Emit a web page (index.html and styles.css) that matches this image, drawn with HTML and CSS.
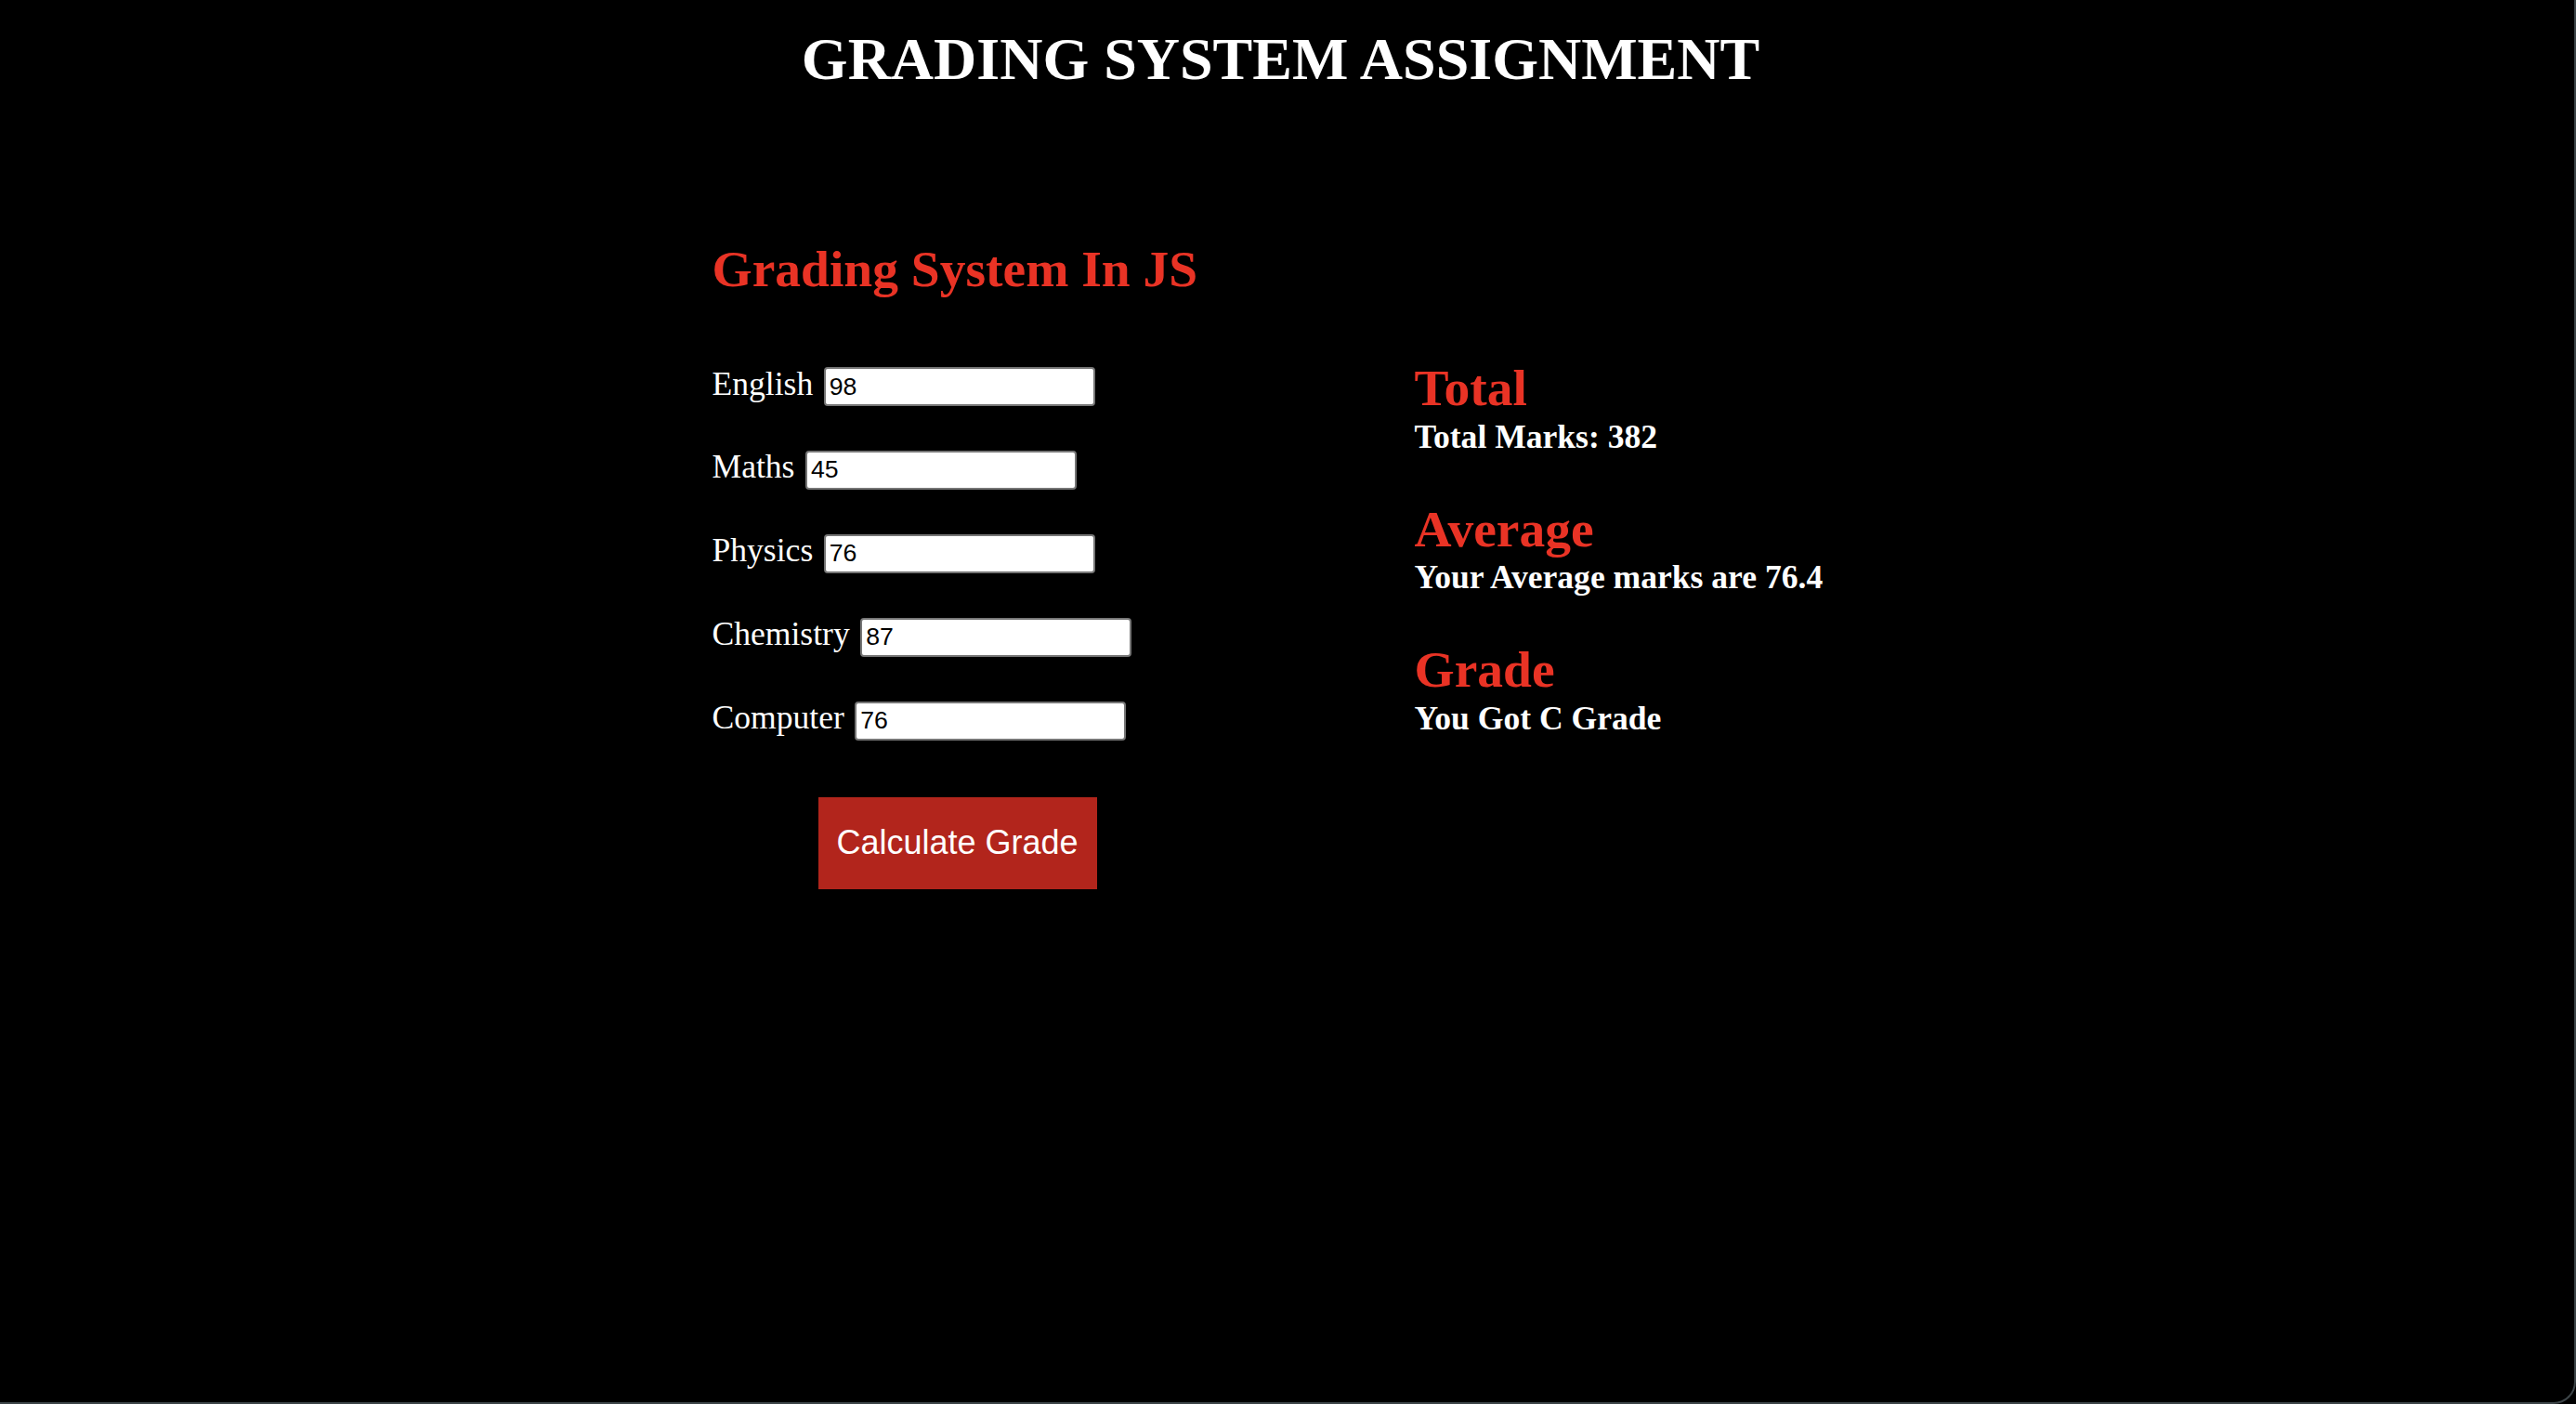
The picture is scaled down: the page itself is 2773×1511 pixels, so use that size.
FILE: index.html
```html
<!DOCTYPE html>
<html lang="en">
<head>
<meta charset="utf-8">
<title>Grading System Assignment</title>
<link rel="stylesheet" href="styles.css">
</head>
<body>
<h1 class="title">GRADING SYSTEM ASSIGNMENT</h1>
<main class="layout">
  <section class="form-col">
    <h2 class="heading">Grading System In JS</h2>
    <div class="row"><label class="label" for="en">English</label><input class="field" id="en" type="text" value="98"></div>
    <div class="row"><label class="label" for="ma">Maths</label><input class="field" id="ma" type="text" value="45"></div>
    <div class="row"><label class="label" for="ph">Physics</label><input class="field" id="ph" type="text" value="76"></div>
    <div class="row"><label class="label" for="ch">Chemistry</label><input class="field" id="ch" type="text" value="87"></div>
    <div class="row"><label class="label" for="co">Computer</label><input class="field" id="co" type="text" value="76"></div>
    <button class="calc-btn" type="button">Calculate Grade</button>
  </section>
  <section class="result-col">
    <div class="result">
      <h2 class="result-head">Total</h2>
      <p class="result-text">Total Marks: 382</p>
    </div>
    <div class="result">
      <h2 class="result-head">Average</h2>
      <p class="result-text">Your Average marks are 76.4</p>
    </div>
    <div class="result">
      <h2 class="result-head">Grade</h2>
      <p class="result-text">You Got C Grade</p>
    </div>
  </section>
</main>
<div class="frame"></div>
</body>
</html>
```
FILE: styles.css
```css
html, body {
  margin: 0;
  padding: 0;
  background: #000;
  min-height: 100%;
}
body {
  font-family: "Liberation Serif", "Times New Roman", serif;
  color: #fff;
}
.title {
  margin: 0;
  padding: 32px 16px 0 0;
  font-size: 64px;
  line-height: 64px;
  font-weight: bold;
  text-align: center;
  color: #fff;
}
.layout {
  width: 1240px;
  margin: 166px auto 0;
  display: grid;
  grid-template-columns: 756px 1fr;
  align-items: start;
}
.form-col {
  width: 528px;
  display: flex;
  flex-direction: column;
}
.heading {
  margin: 0 0 77px;
  font-size: 55.5px;
  line-height: 1;
  font-weight: bold;
  color: #e93325;
  white-space: nowrap;
}
.row {
  display: flex;
  align-items: baseline;
  gap: 11.5px;
  margin-bottom: 47.4px;
}
.row:last-of-type {
  margin-bottom: 0;
}
.label {
  font-size: 35.6px;
  line-height: 36px;
  color: #fff;
}
.field {
  box-sizing: border-box;
  width: 292px;
  height: 42px;
  margin: 0;
  padding: 0 4px;
  border: 2px solid #767676;
  border-radius: 4px;
  background: #fff;
  color: #000;
  font-family: "Liberation Sans", Arial, sans-serif;
  font-size: 26.67px;
}
.calc-btn {
  display: block;
  align-self: center;
  width: 300px;
  height: 99px;
  margin-top: 61px;
  padding: 0;
  border: none;
  background: #b2251c;
  color: #fff;
  font-family: "Liberation Sans", Arial, sans-serif;
  font-size: 36px;
}
.result-col {
  margin-top: 128px;
  display: flex;
  flex-direction: column;
  gap: 53.5px;
}
.result-head {
  margin: 0;
  font-size: 55.5px;
  line-height: 1;
  font-weight: bold;
  color: #e93325;
}
.result-text {
  margin: 7px 0 0;
  font-size: 35.6px;
  line-height: 1;
  font-weight: bold;
  color: #fff;
  white-space: nowrap;
}
.frame {
  position: fixed;
  inset: 0;
  border-right: 2px solid #3d4548;
  border-bottom: 2px solid #3d4548;
  border-bottom-right-radius: 24px;
  pointer-events: none;
}
```
